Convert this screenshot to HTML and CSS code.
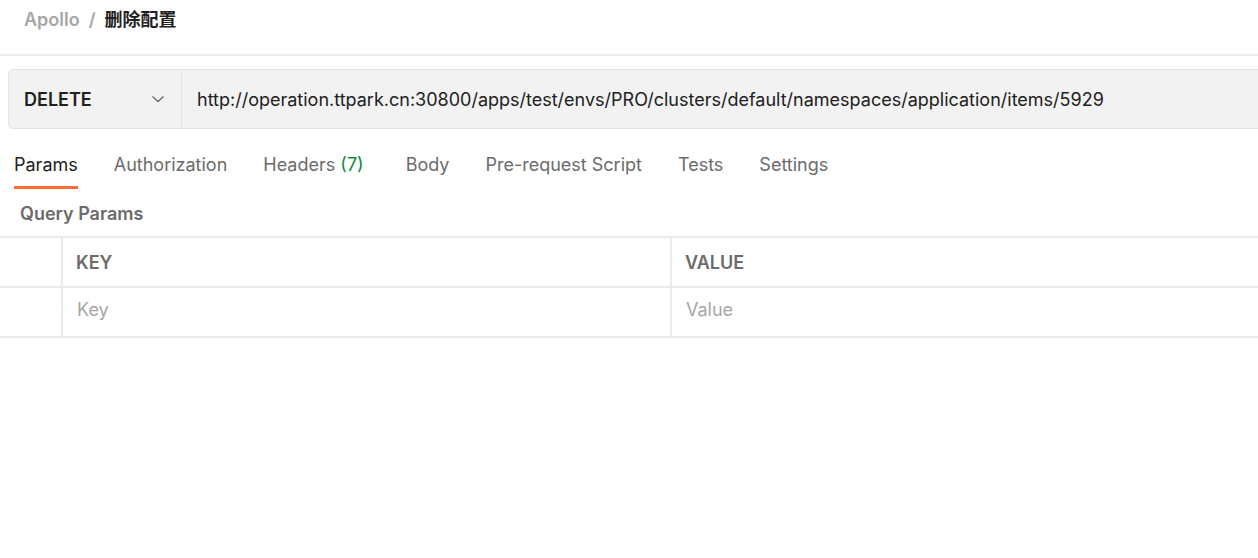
FILE: index.html
```html
<!DOCTYPE html>
<html lang="zh">
<head>
<meta charset="utf-8">
<title>删除配置</title>
<link rel="stylesheet" href="styles.css">
</head>
<body>
  <header class="crumbs">
    <span class="crumb-parent">Apollo</span>
    <span class="crumb-sep">/</span>
    <span class="crumb-current">删除配置</span>
  </header>

  <div class="request-row">
    <div class="request-bar">
      <div class="method">
        <span class="method-name">DELETE</span>
        <svg class="chevron" width="14" height="8" viewBox="0 0 14 8" aria-hidden="true">
          <path d="M1.5 1.5 L7 6.5 L12.5 1.5" fill="none" stroke="#6b6b6b" stroke-width="1.4"/>
        </svg>
      </div>
      <div class="url">http://operation.ttpark.cn:30800/apps/test/envs/PRO/clusters/default/namespaces/application/items/5929</div>
    </div>
  </div>

  <nav class="tabs">
    <span class="tab active">Params</span>
    <span class="tab">Authorization</span>
    <span class="tab tab-count">Headers <span class="count">(7)</span></span>
    <span class="tab">Body</span>
    <span class="tab">Pre-request Script</span>
    <span class="tab">Tests</span>
    <span class="tab">Settings</span>
  </nav>

  <div class="section-title">Query Params</div>

  <div class="table">
    <div class="cell check"></div>
    <div class="cell head">KEY</div>
    <div class="cell head">VALUE</div>
    <div class="cell check"></div>
    <div class="cell placeholder">Key</div>
    <div class="cell placeholder">Value</div>
  </div>
</body>
</html>
```

FILE: styles.css
```css
* { box-sizing: border-box; }

html, body {
  margin: 0;
  padding: 0;
  background: #ffffff;
}

body {
  font-family: Inter, "Noto Sans CJK SC", sans-serif;
  color: #212121;
  font-size: 18px;
  width: 1258px;
  height: 558px;
  overflow: hidden;
}

.crumbs {
  height: 56px;
  display: flex;
  align-items: flex-start;
  padding: 7px 0 0 24px;
  gap: 9px;
  border-bottom: 2px solid #ececec;
  font-size: 18px;
  font-weight: 600;
  line-height: 26px;
}

.crumb-parent { color: #a6a6a6; }
.crumb-sep { color: #a6a6a6; }
.crumb-current { color: #212121; }

.request-row {
  padding: 13px 0 0 8px;
}

.request-bar {
  display: flex;
  height: 60px;
  width: 1270px;
  background: #f2f2f2;
  border: 1px solid #e3e3e3;
  border-radius: 5px;
}

.method {
  width: 173px;
  flex: none;
  display: flex;
  align-items: center;
  justify-content: space-between;
  padding: 0 16px 0 15px;
  border-right: 1px solid #e3e3e3;
  font-weight: 600;
  color: #212121;
}

.chevron { display: block; }

.url {
  display: flex;
  align-items: center;
  padding-left: 15px;
  color: #212121;
  white-space: nowrap;
}

.tabs {
  display: flex;
  padding: 22px 0 0 14px;
  gap: 36px;
  height: 60px;
}

.tab {
  color: #6b6b6b;
  height: 38px;
  line-height: 28px;
  border-bottom: 3px solid transparent;
}

.tab.active {
  color: #212121;
  border-bottom-color: #ff6c37;
}

.tab-count { margin-right: 6px; }

.count { color: #0f8a3c; }

.section-title {
  padding: 11px 0 0 20px;
  height: 47px;
  line-height: 28px;
  font-weight: 600;
  color: #6b6b6b;
}

.table {
  display: grid;
  grid-template-columns: 63px 609px 1fr;
  border-top: 2px solid #ebebeb;
}

.cell {
  height: 50px;
  display: flex;
  align-items: center;
  padding-left: 13px;
  border-bottom: 2px solid #ebebeb;
  border-right: 2px solid #ebebeb;
}

.cell:nth-child(3n) { border-right: none; }

.cell.head {
  font-weight: 600;
  color: #6b6b6b;
}

.cell.placeholder {
  color: #a6a6a6;
  padding-left: 14px;
  padding-bottom: 5px;
}
```
